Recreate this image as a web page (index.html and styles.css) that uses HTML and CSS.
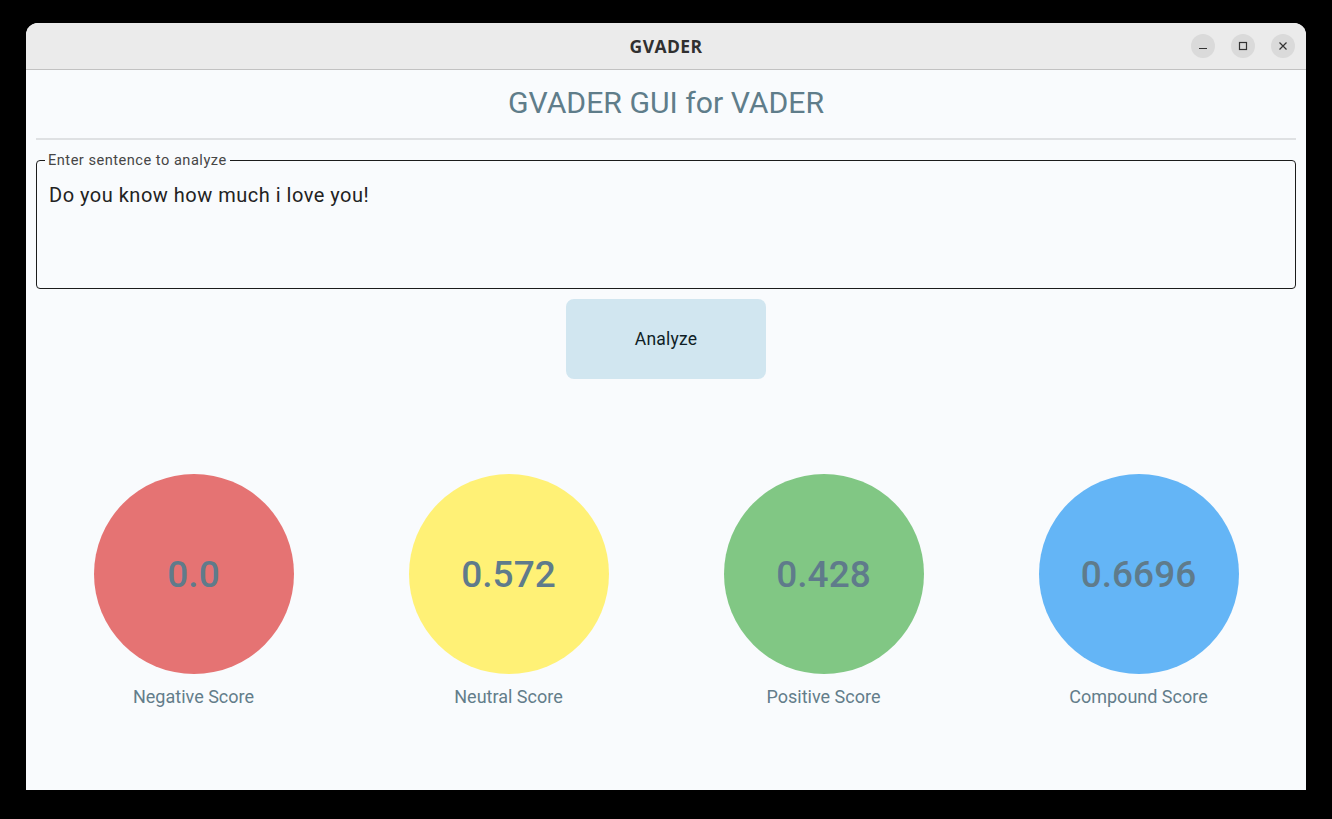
FILE: index.html
```html
<!DOCTYPE html>
<html lang="en">
<head>
<meta charset="utf-8">
<title>GVADER</title>
<link rel="stylesheet" href="styles.css">
</head>
<body>
<div class="window">
  <div class="titlebar">
    <div class="title">GVADER</div>
    <div class="controls">
      <span class="ctl"><svg width="10" height="10" viewBox="0 0 10 10"><path d="M1 7.5h8" stroke="#333" stroke-width="1.2"/></svg></span>
      <span class="ctl"><svg width="10" height="10" viewBox="0 0 10 10"><rect x="1.5" y="1.5" width="7" height="7" fill="none" stroke="#333" stroke-width="1.2"/></svg></span>
      <span class="ctl"><svg width="10" height="10" viewBox="0 0 10 10"><path d="M1.5 1.5l7 7M8.5 1.5l-7 7" stroke="#333" stroke-width="1.2"/></svg></span>
    </div>
  </div>
  <div class="content">
    <h1 class="heading">GVADER GUI for VADER</h1>
    <div class="divider"></div>
    <fieldset class="field">
      <legend class="field-label">Enter sentence to analyze</legend>
      <div class="field-text">Do you know how much i love you!</div>
    </fieldset>
    <div class="actions">
      <button class="analyze">Analyze</button>
    </div>
    <div class="scores">
      <div class="score">
        <div class="circle red">0.0</div>
        <div class="score-label">Negative Score</div>
      </div>
      <div class="score">
        <div class="circle yellow">0.572</div>
        <div class="score-label">Neutral Score</div>
      </div>
      <div class="score">
        <div class="circle green">0.428</div>
        <div class="score-label">Positive Score</div>
      </div>
      <div class="score">
        <div class="circle blue">0.6696</div>
        <div class="score-label">Compound Score</div>
      </div>
    </div>
  </div>
</div>
</body>
</html>
```
FILE: styles.css
```css
* { box-sizing: border-box; }
html, body { margin: 0; height: 100%; }
body {
  background: #000;
  padding: 23px 26px;
  font-family: Roboto, "Liberation Sans", sans-serif;
}
.window {
  width: 1280px;
  height: 767px;
  background: #f9fbfd;
  border-radius: 12px 12px 0 0;
  overflow: hidden;
  display: flex;
  flex-direction: column;
}
.titlebar {
  height: 47px;
  flex: none;
  background: #ebebeb;
  border-bottom: 1px solid #c2c2c2;
  display: flex;
  align-items: center;
  justify-content: center;
  position: relative;
}
.title {
  font-family: "Open Sans", "Noto Sans", sans-serif;
  font-weight: 700;
  font-size: 17.5px;
  color: #303030;
  letter-spacing: 0.4px;
}
.controls {
  position: absolute;
  right: 11px;
  top: 11px;
  display: flex;
  gap: 16px;
}
.ctl {
  width: 24px;
  height: 24px;
  border-radius: 50%;
  background: #dadada;
  display: flex;
  align-items: center;
  justify-content: center;
}
.content {
  flex: 1;
  padding: 0 10px;
  display: flex;
  flex-direction: column;
}
.heading {
  margin: 0;
  height: 68px;
  display: flex;
  align-items: center;
  justify-content: center;
  font-weight: 400;
  font-size: 30.2px;
  color: #5f7d8a;
  padding-bottom: 3px;
}
.divider {
  height: 2px;
  background: #dfe1e3;
  margin-bottom: 12px;
}
.field {
  margin: 0;
  border: 1px solid #1c1c1c;
  border-radius: 4px;
  height: 137px;
  padding: 0 12px;
  min-width: 0;
}
.field-label {
  font-size: 14.6px;
  color: #464646;
  padding: 0 3px;
  margin-left: -4px;
  letter-spacing: 0.5px;
  line-height: 16px;
}
.field-text {
  font-size: 20px;
  color: #222;
  margin-top: 15px;
  letter-spacing: 0.5px;
}
.actions {
  display: flex;
  justify-content: center;
  padding-top: 10px;
}
.analyze {
  width: 200px;
  height: 80px;
  border: none;
  border-radius: 8px;
  background: #d1e6f0;
  font-family: Roboto, "Liberation Sans", sans-serif;
  font-weight: 400;
  font-size: 17.5px;
  color: #0f1e26;
  letter-spacing: 0.2px;
}
.scores {
  display: grid;
  grid-template-columns: repeat(4, 1fr);
  margin-top: 95px;
}
.score {
  display: flex;
  flex-direction: column;
  align-items: center;
}
.circle {
  width: 200px;
  height: 200px;
  border-radius: 50%;
  display: flex;
  align-items: center;
  justify-content: center;
  font-size: 37px;
  font-weight: 500;
  color: #5f7b8b;
}
.red { background: #e57373; }
.yellow { background: #fff176; }
.green { background: #81c784; }
.blue { background: #64b5f6; }
.score-label {
  margin-top: 12px;
  font-size: 18px;
  color: #637d8a;
}
```
